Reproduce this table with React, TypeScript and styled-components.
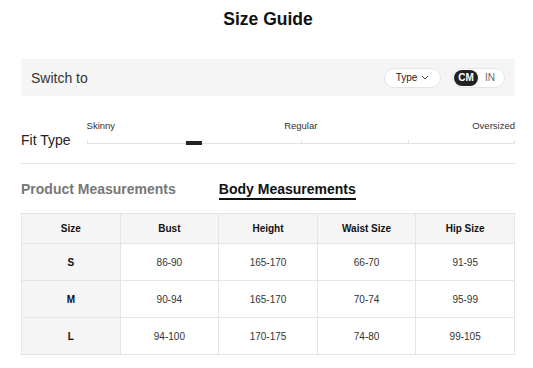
import styled, { createGlobalStyle } from 'styled-components';

const GlobalStyle = createGlobalStyle`
	body {
		margin: 0;
		background: #ffffff;
		font-family: 'Liberation Sans', Arial, sans-serif;
		color: #222222;
	}
`;

const Page = styled.div`
	width: 494px;
	padding: 9px 18px 0 21px;
`;

const Title = styled.h1`
	margin: 0;
	font-size: 17.5px;
	line-height: 20px;
	font-weight: 700;
	text-align: center;
	color: #111111;
`;

const SwitchBar = styled.div`
	display: flex;
	align-items: center;
	justify-content: space-between;
	height: 37px;
	margin-top: 30px;
	padding: 0 10px;
	background: #f5f5f5;
`;

const SwitchLabel = styled.span`
	font-size: 14px;
	color: #333333;
`;

const Controls = styled.div`
	display: flex;
	align-items: center;
	gap: 11px;
`;

const TypeButton = styled.button`
	display: flex;
	align-items: center;
	justify-content: center;
	gap: 4px;
	width: 57px;
	height: 20px;
	padding: 0;
	border: 1px solid #e5e5e5;
	border-radius: 10px;
	background: #ffffff;
	font-family: inherit;
	font-size: 10px;
	color: #222222;
`;

const UnitToggle = styled.div`
	display: flex;
	align-items: center;
	width: 53px;
	height: 20px;
	box-sizing: border-box;
	padding: 0 1px;
	border: 1px solid #e5e5e5;
	border-radius: 10px;
	background: #ffffff;
`;

const Unit = styled.span<{ $active?: boolean }>`
	display: flex;
	align-items: center;
	justify-content: center;
	width: 24px;
	height: 16px;
	border-radius: 8px;
	font-size: 10px;
	font-weight: ${({ $active }) => ($active ? 700 : 400)};
	background: ${({ $active }) => ($active ? '#222222' : 'transparent')};
	color: ${({ $active }) => ($active ? '#ffffff' : '#666666')};
`;

const FitRow = styled.div`
	display: flex;
	align-items: flex-end;
	gap: 16px;
	padding: 24px 0 15px;
	border-bottom: 1px solid #e5e5e5;
`;

const FitLabel = styled.span`
	font-size: 14px;
	line-height: 16px;
	color: #222222;
`;

const Slider = styled.div`
	flex: 1;
	display: flex;
	flex-direction: column;
	gap: 8px;
	margin-bottom: 3px;
`;

const SliderLabels = styled.div`
	display: grid;
	grid-template-columns: 1fr auto 1fr;
	font-size: 9.5px;
	line-height: 11px;
	color: #333333;
`;

const SliderLabel = styled.span<{ $align: string }>`
	text-align: ${({ $align }) => $align};
`;

const Track = styled.div`
	position: relative;
	height: 4px;
	border-bottom: 1px solid #e3e3e3;
	margin-bottom: 1px;
`;

const Tick = styled.span<{ $at: number }>`
	position: absolute;
	bottom: 0;
	left: ${({ $at }) => $at}%;
	width: 1px;
	height: 3px;
	margin-left: ${({ $at }) => ($at === 100 ? '-1px' : '0')};
	background: #e3e3e3;
`;

const Thumb = styled.span`
	position: absolute;
	top: 2px;
	left: 23.2%;
	width: 16px;
	height: 4px;
	background: #222222;
`;

const Tabs = styled.div`
	display: flex;
	gap: 43px;
	margin-top: 17px;
`;

const Tab = styled.div<{ $active?: boolean }>`
	font-size: 14px;
	line-height: 16px;
	font-weight: 700;
	padding-bottom: 1px;
	color: ${({ $active }) => ($active ? '#111111' : '#777777')};
	border-bottom: 2px solid ${({ $active }) => ($active ? '#111111' : 'transparent')};
`;

const Table = styled.table`
	width: 100%;
	margin-top: 13px;
	border-collapse: collapse;
	table-layout: fixed;
	font-size: 10px;
`;

const HeadCell = styled.th`
	height: 29px;
	padding: 0;
	border: 1px solid #e5e5e5;
	background: #f5f5f5;
	font-weight: 700;
	color: #111111;
`;

const Cell = styled.td<{ $first?: boolean }>`
	height: 36px;
	padding: 0;
	text-align: center;
	border: 1px solid #e5e5e5;
	background: ${({ $first }) => ($first ? '#f5f5f5' : '#ffffff')};
	font-weight: ${({ $first }) => ($first ? 700 : 400)};
	color: ${({ $first }) => ($first ? '#0b0b1a' : '#333333')};
`;

const columns = ['Size', 'Bust', 'Height', 'Waist Size', 'Hip Size'];

const rows = [
	['S', '86-90', '165-170', '66-70', '91-95'],
	['M', '90-94', '165-170', '70-74', '95-99'],
	['L', '94-100', '170-175', '74-80', '99-105'],
];

const Chevron = () => (
	<svg width="8" height="5" viewBox="0 0 8 5" fill="none">
		<path d="M1 1l3 3 3-3" stroke="#333" strokeWidth="0.9" />
	</svg>
);

export default function App() {
	return (
		<>
			<GlobalStyle />
			<Page>
				<Title>Size Guide</Title>
				<SwitchBar>
					<SwitchLabel>Switch to</SwitchLabel>
					<Controls>
						<TypeButton>
							Type <Chevron />
						</TypeButton>
						<UnitToggle>
							<Unit $active>CM</Unit>
							<Unit>IN</Unit>
						</UnitToggle>
					</Controls>
				</SwitchBar>
				<FitRow>
					<FitLabel>Fit Type</FitLabel>
					<Slider>
						<SliderLabels>
							<SliderLabel $align="left">Skinny</SliderLabel>
							<SliderLabel $align="center">Regular</SliderLabel>
							<SliderLabel $align="right">Oversized</SliderLabel>
						</SliderLabels>
						<Track>
							<Tick $at={0} />
							<Tick $at={50} />
							<Tick $at={75} />
							<Tick $at={100} />
							<Thumb />
						</Track>
					</Slider>
				</FitRow>
				<Tabs>
					<Tab>Product Measurements</Tab>
					<Tab $active>Body Measurements</Tab>
				</Tabs>
				<Table>
					<thead>
						<tr>
							{columns.map((c) => (
								<HeadCell key={c}>{c}</HeadCell>
							))}
						</tr>
					</thead>
					<tbody>
						{rows.map((r) => (
							<tr key={r[0]}>
								{r.map((v, i) => (
									<Cell key={i} $first={i === 0}>
										{v}
									</Cell>
								))}
							</tr>
						))}
					</tbody>
				</Table>
			</Page>
		</>
	);
}
